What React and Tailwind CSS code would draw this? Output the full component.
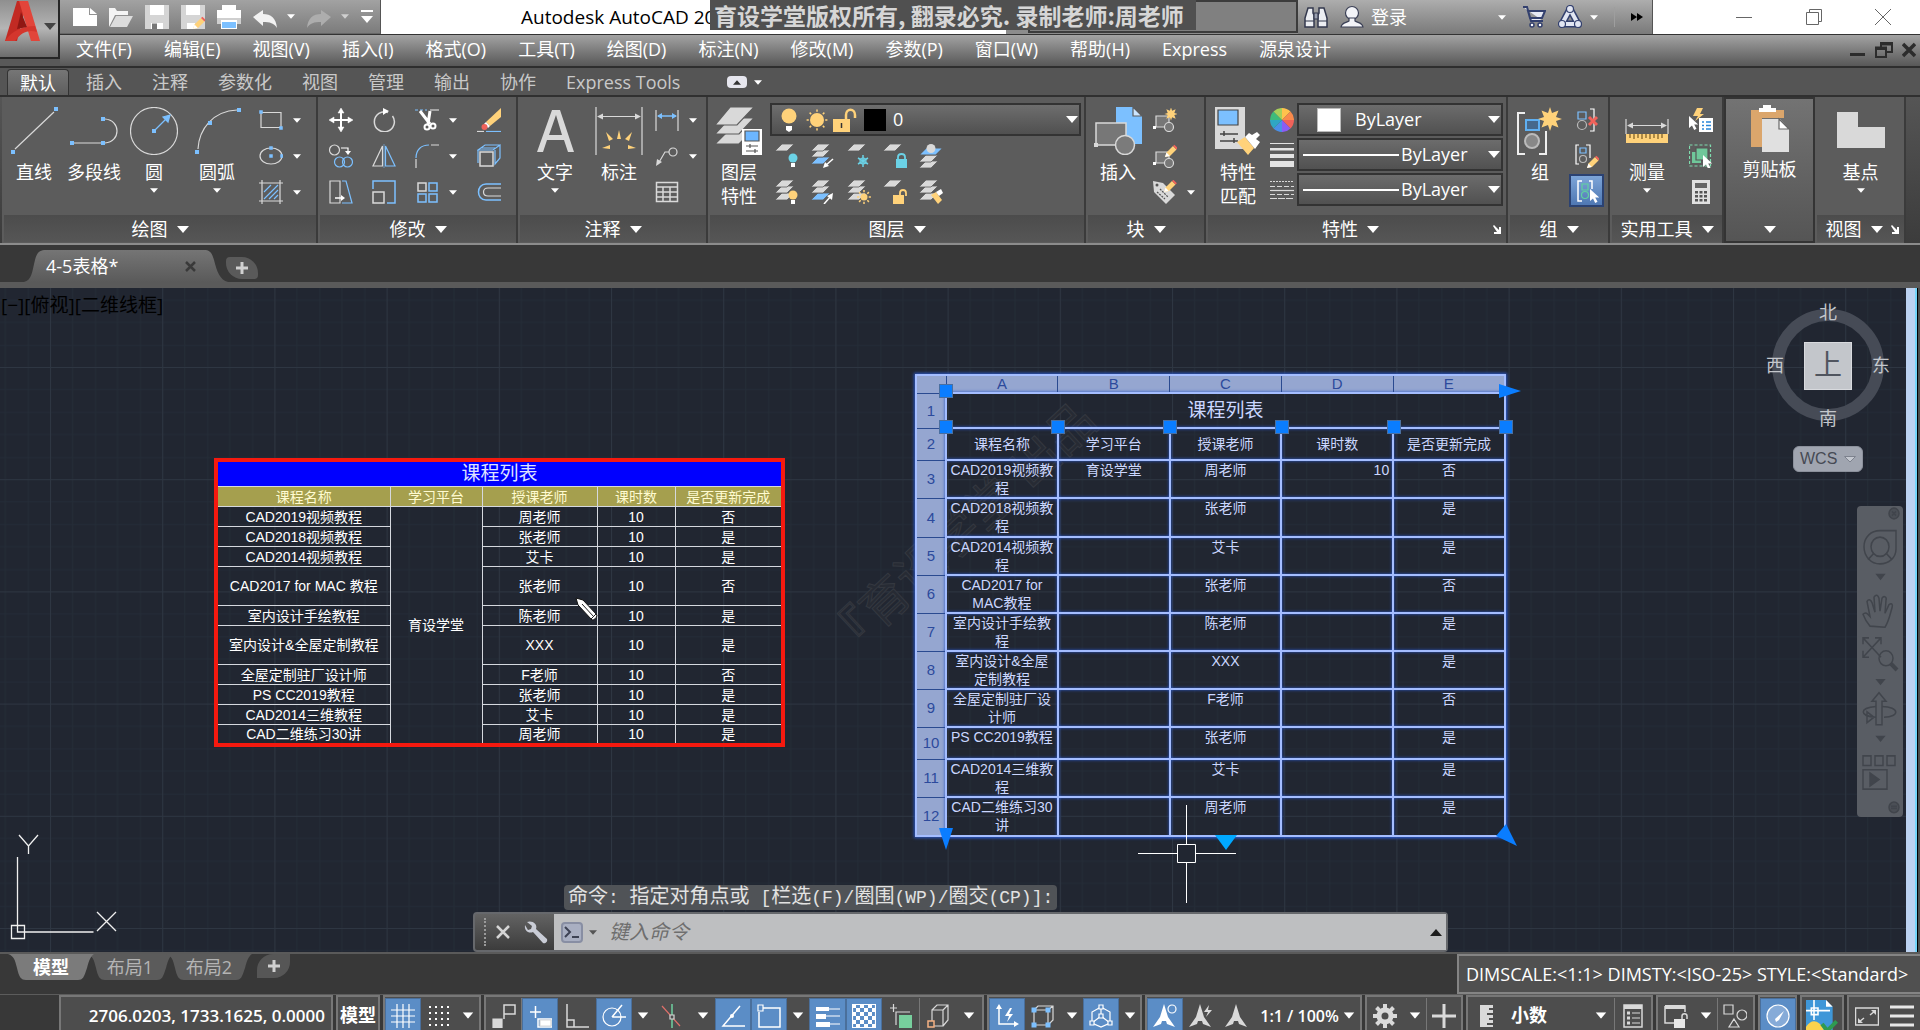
import { Fragment } from "react";

function Caret({ big = false, className = "fill-white" }) {
  return (
    <svg
      viewBox="0 0 12 7"
      className={`shrink-0 ${big ? "w-3 h-[7px]" : "w-2 h-[5px]"} ${className}`}
    >
      <path d="M0 0h12L6 7z" />
    </svg>
  );
}

function Svg({ children, size = "w-6 h-6", box = "0 0 24 24", className = "" }) {
  return (
    <svg viewBox={box} className={`shrink-0 ${size} ${className}`} fill="none" stroke="#d9d9d9" strokeWidth="1.2">
      {children}
    </svg>
  );
}

function Big({ children }) {
  return (
    <Svg size="w-12 h-12" box="0 0 48 48">
      {children}
    </Svg>
  );
}

const Grip = ({ x, y, s = 4 }) => (
  <rect x={x - s / 2} y={y - s / 2} width={s} height={s} fill="#7cc0ff" stroke="none" />
);

const Pencil = ({ x = 0, y = 0 }) => (
  <g transform={`translate(${x} ${y})`} stroke="none">
    <path d="M0 12l1.5-4.5L8 1l3.5 3.5L5 11z" fill="#ffd27a" />
    <path d="M8 1l1.4-1.2 3.5 3.4-1.4 1.3z" fill="#f0625a" />
    <path d="M0 12l1.5-4.5 3.3 3.4z" fill="#fff" />
  </g>
);

const Sun = ({ cx, cy, r }) => (
  <g stroke="#ffd27a" strokeWidth="1.5">
    <circle cx={cx} cy={cy} r={r} fill="#ffd27a" stroke="none" />
    {[0, 45, 90, 135, 180, 225, 270, 315].map((a) => (
      <path key={a} d={`M${cx} ${cy - r - 1.2}v-2.2`} transform={`rotate(${a} ${cx} ${cy})`} />
    ))}
  </g>
);

const Star = ({ cx, cy, k = 1 }) => (
  <path
    transform={`translate(${cx} ${cy}) scale(${k})`}
    fill="#ffd27a"
    stroke="none"
    d="M0-12l2 6 6.500-2.500L6-2l6 2-6 2 2.500 6.500L2 6 0 12l-2-6-6.500 2.500L-6 2l-6-2 6-2-2.500-6.500L-2-6z"
  />
);

const Sheet = ({ y, fill = "#d9d9d9" }) => (
  <path d={`M7 ${y}h12l-7 7H0z`} fill={fill} stroke="#5c5c5c" strokeWidth="0.8" />
);

const Cursor = ({ x, y }) => (
  <path transform={`translate(${x} ${y})`} d="M0 0v12l3-2.500 2.200 4.500 2.300-1.200-2.300-4.300h4z" fill="#fff" stroke="none" />
);

/* ---------- title bar ---------- */

function QuickAccess() {
  const items = [
    ["新建", <path key="a" d="M0 3h16v7h8v11H0z M17 3l7 6h-7z" fill="#fff" stroke="none" />],
    ["打开", <g key="a" stroke="none"><path d="M0 3h6l2 3h11v4H6l-6 12z" fill="#f4f4f4" /><path d="M7 11h17l-6 11H1z" fill="#dcdcdc" /></g>],
    ["保存", <g key="a" stroke="none"><path d="M0 0h24v24H0z" fill="#d5d5d5" /><path d="M5 0h14v10H5zM6 18h12v6H6z" fill="#fff" /><path d="M7 18.500h5V24H7z" fill="#777" /></g>],
    ["另存为", <g key="a" stroke="none"><path d="M0 0h24v24H0z" fill="#d5d5d5" /><path d="M5 0h14v10H5zM6 18h8v6H6z" fill="#fff" /><Pencil x={12} y={12} /></g>],
    ["打印", <g key="a" stroke="none"><path d="M5 0h14v6H5zM0 5h24v8H0z" fill="#fff" /><path d="M0 13h24v6H0z" fill="#cfcfcf" /><path d="M4 15h16v9H4z" fill="#fff" /><path d="M5 17h14v6H5z" fill="#7cc0ff" /></g>],
  ];
  return (
    <div className="w-[321px] shrink-0 flex items-center gap-3 pl-[13px] bg-gradient-to-b from-[#a2a2a2] to-[#7c7c7c] border-r border-[#555] border-b border-b-[#666]">
      {items.map(([label, icon]) => (
        <button key={label} aria-label={label}>
          <Svg>{icon}</Svg>
        </button>
      ))}
      <button aria-label="放弃" className="flex items-center gap-[10px]">
        <Svg><path d="M0 12l10-7v4c8 0 13 4 14 14-3-5-7-6-14-6v4z" fill="#f2f2f2" stroke="none" /></Svg>
        <Caret />
      </button>
      <button aria-label="重做" className="flex items-center gap-[10px]">
        <Svg><path d="M24 12L14 5v4C6 9 1 13 0 23c3-5 7-6 14-6v4z" fill="#adadad" stroke="none" /></Svg>
        <Caret className="fill-[#cfcfcf]" />
      </button>
      <button aria-label="自定义" className="flex flex-col gap-1 items-center">
        <span className="w-3 h-[2px] bg-white" />
        <Caret big />
      </button>
    </div>
  );
}

function TitleBar() {
  return (
    <div className="h-[34px] flex bg-white">
      <QuickAccess />
      <div className="relative flex-1 min-w-0 flex items-center pl-[140px] text-black text-[19px] whitespace-nowrap">
        Autodesk AutoCAD 20
        <div className="absolute z-10 left-[329px] top-0 w-[486px] h-[30px] bg-[#505050] text-[#d6d6d6] text-[23px] leading-[30px] font-bold whitespace-nowrap pl-1 font-['Noto_Sans_CJK_SC',sans-serif]">
          育设学堂版权所有, 翻录必究. 录制老师:周老师
        </div>
      </div>
      <div className="w-[292px] flex bg-[#8c8c8c] pl-[22px]">
        <input aria-label="搜索" className="w-full min-w-0 bg-[#808080] border-2 border-[#3c3c3c] h-[33px]" />
      </div>
      <div className="w-[355px] shrink-0 flex items-center pl-[6px] bg-gradient-to-b from-[#adadad] to-[#7a7a7a] border-r border-[#555] text-white text-[18px]">
        <button aria-label="查找">
          <Svg>
            <path d="M4 3h5v5l1 2v12H1v-9zM15 3h5l3 10v9h-9V10l1-2z" fill="#eceef2" stroke="#33384d" strokeWidth="1.500" />
            <path d="M10 8h4v6h-4zM1 16h9M14 16h9" stroke="#33384d" fill="#9aa0b0" />
          </Svg>
        </button>
        <button className="ml-3 flex items-center gap-[7px]">
          <Svg>
            <circle cx="12" cy="8" r="6.500" fill="#f3f4f8" stroke="#3a3f55" />
            <path d="M1 22c1-5 5-4 8-6v-3h6v3c3 2 7 1 8 6z" fill="#f3f4f8" stroke="#3a3f55" />
          </Svg>
          登录
        </button>
        <span className="flex-1" />
        <Caret />
        <button aria-label="商店" className="ml-4">
          <Svg>
            <path d="M1 2h4l4 14h12M6 6h17l-3 7H8z" fill="#e6e9f3" stroke="#33406e" strokeWidth="2" />
            <circle cx="10" cy="20" r="2" fill="#fff" stroke="#33406e" strokeWidth="1.500" />
            <circle cx="18" cy="20" r="2" fill="#fff" stroke="#33406e" strokeWidth="1.500" />
          </Svg>
        </button>
        <button aria-label="A360" className="ml-3 mr-2 flex items-center gap-2">
          <Svg>
            <path d="M12 4L4 19h16z" stroke="#33406e" strokeWidth="7" strokeLinejoin="round" />
            <path d="M12 4L4 19h16z" stroke="#e2e6f2" strokeWidth="4" />
            {[[12, 4], [4, 19], [20, 19]].map(([x, y]) => (
              <circle key={x} cx={x} cy={y} r="3.500" fill="#e2e6f2" stroke="#33406e" />
            ))}
          </Svg>
          <Caret />
        </button>
        <span className="w-px h-5 bg-[#9e9e9e] ml-2 mr-4" />
        <svg viewBox="0 0 12 8" className="w-3 h-2 mr-[9px]"><path d="M0 0l6 4-6 4zM6 0l6 4-6 4z" /></svg>
      </div>
      <div className="w-[267px] shrink-0 flex items-center justify-between pl-[83px] pr-[29px]">
        <button aria-label="最小化"><svg viewBox="0 0 16 16" className="w-4 h-4" stroke="#666" fill="none"><path d="M0 8.500h16" /></svg></button>
        <button aria-label="还原"><svg viewBox="0 0 16 16" className="w-4 h-4" stroke="#666" fill="none"><path d="M.5 3.500h12v12H.5zM3.500 3.500v-3h12v12h-3" /></svg></button>
        <button aria-label="关闭"><svg viewBox="0 0 16 16" className="w-4 h-4" stroke="#666" fill="none"><path d="M0 0l16 16M16 0L0 16" /></svg></button>
      </div>
    </div>
  );
}

const menus = [
  "文件(F)", "编辑(E)", "视图(V)", "插入(I)", "格式(O)", "工具(T)", "绘图(D)", "标注(N)",
  "修改(M)", "参数(P)", "窗口(W)", "帮助(H)", "Express", "源泉设计",
];

function MenuBar() {
  return (
    <nav className="h-8 flex items-center gap-8 pl-4 pr-1 pb-[2px] text-[18px] text-white bg-gradient-to-b from-[#a3a3a3] to-[#585858] border-t border-[#333]">
      {menus.map((m) => (
        <button key={m} className="whitespace-nowrap">{m}</button>
      ))}
      <span className="flex-1" />
      <div className="flex gap-[9px]">
        <button aria-label="最小化文档"><svg viewBox="0 0 16 16" className="w-4 h-4"><path d="M0 11h15v3H0z" fill="#2c2c2c" /></svg></button>
        <button aria-label="还原文档"><svg viewBox="0 0 18 16" className="w-[18px] h-4" fill="none" stroke="#2c2c2c" strokeWidth="2"><path d="M1 5.500h10v9.500H1zM6 5V1h11v9h-6M1 7h10M6 2.500h11" /></svg></button>
        <button aria-label="关闭文档"><svg viewBox="0 0 14 16" className="w-[14px] h-4" stroke="#2c2c2c" strokeWidth="3.500"><path d="M1 2l12 12M13 2L1 14" /></svg></button>
      </div>
    </nav>
  );
}

function Header() {
  return (
    <header className="flex">
      <div className="w-[60px] shrink-0 bg-[#595959]">
        <button aria-label="应用程序菜单" className="w-[60px] h-[59px] flex items-center bg-gradient-to-b from-[#8f8f8f] via-[#b5b5b5] to-[#6c6c6c] border-r-2 border-b-2 border-[#262626] pl-1 pb-4">
          <svg viewBox="0 0 38 42" className="w-[38px] h-[42px] shrink-0">
            <path d="M13 1h10L13 41H1z" fill="#c22a23" />
            <path d="M15 1h9l12 40H27z" fill="#e2453a" />
            <path d="M1 41C8 30 20 26 31 26l2 6c-8-3-16 0-22 9z" fill="#d4362d" />
            <path d="M17 12l-4 17 10-2z" fill="#8f1713" />
          </svg>
          <Caret big className="fill-[#444] ml-[2px] mt-3" />
        </button>
      </div>
      <div className="flex-1 min-w-0">
        <TitleBar />
        <MenuBar />
      </div>
    </header>
  );
}

/* ---------- ribbon ---------- */

const ribbonTabs = ["插入", "注释", "参数化", "视图", "管理", "输出", "协作", "Express Tools"];

function RibbonTabs() {
  return (
    <div className="h-[31px] flex items-end bg-[#555] border-t-2 border-[#2e2e2e] border-b-2 border-b-[#303030] text-[18px] text-[#c9c9c9]">
      <button className="ml-[7px] mr-[2px] h-[26px] leading-[26px] px-3 text-white bg-gradient-to-b from-[#767676] to-[#5e5e5e] border border-b-0 border-[#333] rounded-t-sm">
        默认
      </button>
      {ribbonTabs.map((t) => (
        <button key={t} className="px-[15px] h-[26px] leading-[26px] whitespace-nowrap">{t}</button>
      ))}
      <button aria-label="最小化功能区" className="h-[26px] ml-8 flex items-center gap-[7px]">
        <span className="w-5 h-3 rounded-sm bg-[#e6e6ee] flex items-center justify-center">
          <Caret className="fill-[#333] rotate-180" />
        </span>
        <Caret />
      </button>
    </div>
  );
}

function Panel({ title, width, launcher = false, children }) {
  return (
    <section className={`${width} shrink-0 flex flex-col bg-[#5c5c5c] border-r-2 border-[#3b3b3b]`}>
      <div className="h-[118px] flex">{children}</div>
      <div className="h-[27px] ml-[2px] pt-[2px] flex items-center bg-gradient-to-b from-[#4c4c4c] to-[#565656] text-white text-[18px]">
        <button className="flex-1 flex items-center justify-center gap-[9px] whitespace-nowrap">
          {title}
          <Caret big />
        </button>
        {launcher && (
          <button aria-label={`${title}设置`} className="mr-1">
            <svg viewBox="0 0 9 9" className="w-[9px] h-[9px]"><path d="M0 1l1-1 5 5V2h2v7H1V7h3z" fill="#fff" /></svg>
          </button>
        )}
      </div>
    </section>
  );
}

function BigButton({ lines, width, icon, caret = false }) {
  return (
    <button className={`${width} shrink-0 flex flex-col items-center pt-[10px] text-white text-[18px] leading-6`}>
      <Big>{icon}</Big>
      <span className="mt-[5px] flex flex-col whitespace-nowrap">
        {lines.map((l) => (
          <span key={l}>{l}</span>
        ))}
      </span>
      {caret && <Caret className="fill-white mt-1" />}
    </button>
  );
}

function SmallButton({ label, icon, caret = false }) {
  return (
    <button aria-label={label} className="h-9 flex items-center gap-[10px]">
      <Svg>{icon}</Svg>
      {caret && <Caret />}
    </button>
  );
}

function DrawPanel() {
  return (
    <Panel title="绘图" width="w-[316px]">
      <BigButton lines={["直线"]} width="w-16" icon={<><path d="M5 42L44 5" /><Grip x={3} y={45} /><Grip x={46} y={2} /></>} />
      <BigButton lines={["多段线"]} width="w-[56px]" icon={<><path d="M4 36h27M35 12c16 1 16 23 0 24" /><Grip x={2} y={36} /><Grip x={33} y={36} /><Grip x={33} y={12} /></>} />
      <BigButton
        lines={["圆"]}
        width="w-16"
        caret
        icon={<><circle cx="24" cy="24" r="23.500" /><path d="M24 24L37 11" stroke="#7cc0ff" /><path d="M40 8l-2 7-5-5z" fill="#7cc0ff" stroke="#7cc0ff" /><Grip x={24} y={24} /></>}
      />
      <BigButton lines={["圆弧"]} width="w-[62px]" caret icon={<><path d="M5 42C6 22 20 4 44 3" /><Grip x={4} y={45} /><Grip x={17} y={16} /><Grip x={46} y={3} /></>} />
      <div className="pt-[5px] ml-[11px]">
        <SmallButton label="矩形" caret icon={<><path d="M2 4.500h20v15H2z" /><Grip x={2} y={4} s={3.500} /><Grip x={22} y={20} s={3.500} /></>} />
        <SmallButton label="椭圆" caret icon={<><ellipse cx="12" cy="12" rx="11" ry="8" /><Grip x={12} y={12} s={3.500} /><Grip x={12} y={4} s={3.500} /><Grip x={23} y={12} s={3.500} /></>} />
        <SmallButton label="图案填充" caret icon={<><path d="M3 0v24M21 0v24M0 3h24M0 21h24" /><path d="M5 12l7-7M5 19L19 5M10 19l9-9M15 19l4-4" stroke="#7cc0ff" /></>} />
      </div>
    </Panel>
  );
}

function ModifyPanel() {
  return (
    <Panel title="修改" width="w-[200px]">
      <div className="pt-[5px] pl-[11px] grid grid-cols-[43px_43px_62px_24px] auto-rows-[36px]">
        <SmallButton label="移动" icon={<g stroke="#fff" strokeWidth="2"><path d="M12 3v18M3 12h18" /><path d="M12 0l3 5H9zM12 24l3-5H9zM0 12l5-3v6zM24 12l-5-3v6z" fill="#fff" strokeWidth="0.500" /></g>} />
        <SmallButton label="旋转" icon={<><path d="M16 4.500A10 10 0 1 0 20.500 8" strokeWidth="1.500" /><path d="M11 0l6 3-6 4z" fill="#fff" stroke="none" /></>} />
        <SmallButton
          label="修剪"
          caret
          icon={<><path d="M0 2h12" stroke="#7cc0ff" strokeDasharray="3 2" /><path d="M15 2h9" /><g stroke="#fff" strokeWidth="2"><path d="M5 3l10 13M15 3l-2 13" strokeWidth="3" /><circle cx="12" cy="19" r="2.500" /><circle cx="18" cy="18" r="2.500" /></g></>}
        />
        <SmallButton label="删除" icon={<><path d="M0 23.500h7" /><path d="M9 23.500h15" stroke="#7cc0ff" /><path d="M24 0v9L13 18l-4-4z" fill="#ffd27a" stroke="none" /><path d="M9 14l4 4-2 2-4-4z" fill="#fff" stroke="none" /><circle cx="7.500" cy="19" r="3" fill="#f0625a" stroke="none" /></>} />
        <SmallButton label="复制" icon={<><circle cx="5.500" cy="6" r="5" /><path d="M12 4h7v4" stroke="#fff" /><path d="M16 7h6l-3 4z" fill="#fff" stroke="none" /><circle cx="10.500" cy="18" r="5" stroke="#7cc0ff" /><circle cx="18.500" cy="18" r="5" stroke="#7cc0ff" /></>} />
        <SmallButton label="镜像" icon={<><path d="M10.500 2v20H1z" /><path d="M13.500 2v20H23z" stroke="#7cc0ff" /><path d="M12 0v24" stroke="#7cc0ff" strokeWidth="0.600" /></>} />
        <SmallButton label="圆角" caret icon={<><path d="M1 24v-9M16 1h8" /><path d="M1 14C1 6 6 1 14 1" stroke="#7cc0ff" /></>} />
        <SmallButton label="分解" icon={<><path d="M3 8h13v14H3z" strokeWidth="1.500" /><path d="M1 6v13M1 6l7-5h15l-7 5zM23 1v13l-5 6V6M4 4h14" stroke="#7cc0ff" /></>} />
        <SmallButton label="拉伸" icon={<><path d="M1 1h10v22H1z" /><path d="M13 1h4l6 22H13" stroke="#7cc0ff" /><path d="M6 18h8" stroke="#fff" strokeWidth="1.500" /><path d="M12 15l4 3-4 3z" fill="#fff" stroke="none" /></>} />
        <SmallButton label="缩放" icon={<><path d="M1 12h11v11H1z" strokeWidth="1.500" /><path d="M1 9V1h22v22h-8" stroke="#7cc0ff" strokeWidth="1.500" /></>} />
        <SmallButton label="阵列" caret icon={<><path d="M3 3h8v8H3z" strokeWidth="1.500" /><path d="M14 3h8v8h-8zM3 14h8v8H3zM14 14h8v8h-8z" stroke="#7cc0ff" strokeWidth="1.500" /></>} />
        <SmallButton label="偏移" icon={<><path d="M24 4H9C-1 4-1 20 9 20h15" stroke="#7cc0ff" strokeWidth="1.500" /><path d="M24 8H11c-6 0-6 8 0 8h13" /></>} />
      </div>
    </Panel>
  );
}

function AnnotatePanel() {
  return (
    <Panel title="注释" width="w-[190px]">
      <BigButton lines={["文字"]} width="w-[74px]" caret icon={<path d="M6 45L21 3h8l14 42h-6l-4-12H16l-4 12zM18 28h13L25 8z" fill="#d9d9d9" stroke="none" fillRule="evenodd" />} />
      <BigButton
        lines={["标注"]}
        width="w-[54px]"
        icon={
          <>
            <path d="M1 0v48M47 0v48M3 9.500h42" />
            <path d="M2 9.500l6-3v6zM46 9.500l-6-3v6z" fill="#d9d9d9" stroke="none" />
            <g fill="#ffd27a" stroke="none"><path d="M22 32l2-9 2 9zM14 34l-3-9 7 7zM34 34l3-9-7 7zM15 42l-8-1 8-3zM33 42l8-1-8-3z" /></g>
          </>
        }
      />
      <div className="pt-[5px] ml-[9px]">
        <SmallButton label="线性" caret icon={<><path d="M1 2v21M23 2v21" /><path d="M3 8h18" stroke="#7cc0ff" strokeWidth="1.500" /><path d="M2 8l5-3v6zM22 8l-5-3v6z" fill="#7cc0ff" stroke="none" /></>} />
        <SmallButton label="引线" caret icon={<><circle cx="18" cy="8" r="4" /><path d="M14 8h-4L3 20" /><path d="M1 22l1-7 5 3z" fill="#d9d9d9" stroke="none" /></>} />
        <SmallButton label="表格" icon={<path d="M1.500 2.500h21v19h-21zM1.500 7h21M1.500 12h21M1.500 17h21M8 7v14M15 7v14" strokeWidth="1.500" />} />
      </div>
    </Panel>
  );
}

function LayerPanel() {
  const badges = [
    ["关", <g key="b"><Sheet y={0} /><circle cx="18" cy="14" r="4.500" fill="#6bd2e6" stroke="none" /><path d="M16 19h4v4h-4z" fill="#fff" stroke="none" /></g>],
    ["隔离", <g key="b"><Sheet y={13} fill="#7cc0ff" /><Sheet y={6} /><Sheet y={0} /><path d="M22 15l-8 7" stroke="#fff" strokeWidth="1.500" /><path d="M12 24l2-6 4 4z" fill="#fff" stroke="none" /></g>],
    ["冻结", <g key="b"><Sheet y={0} /><path d="M16 11v12M11 14l10 6M11 20l10-6" stroke="#6bd2e6" strokeWidth="1.500" /><circle cx="16" cy="17" r="3" stroke="#6bd2e6" /></g>],
    ["锁定", <g key="b"><Sheet y={0} /><path d="M13 15h11v9H13z" fill="#6bd2e6" stroke="none" /><path d="M15 15v-2c0-4 7-4 7 0v2" stroke="#6bd2e6" strokeWidth="1.800" /></g>],
    ["置为当前", <g key="b"><Sheet y={17} /><Sheet y={11} /><path d="M7 4h17l-7 7H0z" fill="#7cc0ff" stroke="#5c5c5c" /><circle cx="12" cy="4.500" r="4.500" fill="#d9d9d9" stroke="none" /></g>],
    ["打开", <g key="b"><Sheet y={13} /><Sheet y={6} /><Sheet y={0} /><circle cx="18" cy="15" r="4.500" fill="#ffd27a" stroke="none" /><path d="M16 20h4v4h-4z" fill="#fff" stroke="none" /></g>],
    ["取消隔离", <g key="b"><Sheet y={13} fill="#7cc0ff" /><Sheet y={6} /><Sheet y={0} /><path d="M13 24l7-8" stroke="#fff" strokeWidth="1.500" /><path d="M22 13l-1 7-5-4z" fill="#fff" stroke="none" /></g>],
    ["解冻", <g key="b"><Sheet y={13} /><Sheet y={6} /><Sheet y={0} /><Sun cx={17} cy={17} r={3.5} /></g>],
    ["解锁", <g key="b"><Sheet y={0} /><path d="M10 15h11v9H10z" fill="#ffd27a" stroke="none" /><path d="M17 15v-2c0-4 6-4 6 0v3" stroke="#ffd27a" strokeWidth="1.800" /></g>],
    ["匹配图层", <g key="b"><Sheet y={13} /><Sheet y={6} /><Sheet y={0} /><path d="M12 15l5-3 6 8-4 4z" fill="#ffd27a" stroke="none" /><path d="M17 12l3 4 4-3-2-4z" fill="#fff" stroke="none" /></g>],
  ];
  return (
    <Panel title="图层" width="w-[378px]">
      <BigButton
        lines={["图层", "特性"]}
        width="w-[62px]"
        icon={
          <>
            <g fill="#d9d9d9" stroke="#5c5c5c"><path d="M15 22h24L24 37H0z" /><path d="M15 11h24L24 27H0z" /><path d="M15 0h24L22 18H0z" /></g>
            <path d="M27 22h20v26H27z" fill="#fff" stroke="none" />
            <path d="M30 24h14v10H30z" fill="#6cb6ff" stroke="#555" />
            <path d="M31 39h12M31 44h12M35 37v4M40 42v4" stroke="#555" />
          </>
        }
      />
      <div className="flex-1 pt-[6px] mr-[3px]">
        <div className="h-[33px] flex items-center pl-2 pr-px bg-gradient-to-b from-[#6e6e6e] to-[#505050] border-2 border-[#333]">
          <Svg size="w-[18px] h-6" box="0 0 18 24"><circle cx="9" cy="8" r="7.500" fill="#ffd27a" stroke="none" /><path d="M6 18h6v4l-3 2-3-2z" fill="#fff" stroke="none" /></Svg>
          <Svg className="ml-[7px]"><Sun cx={12} cy={12} r={7} /></Svg>
          <Svg className="ml-1"><path d="M0 11h17v13H0z" fill="#ffd27a" stroke="none" /><path d="M13 11V7c0-7 9-7 9 0v3" stroke="#ffd27a" strokeWidth="2.500" /><path d="M8.500 15v5" stroke="#333" strokeWidth="1.500" /></Svg>
          <span className="ml-[7px] w-[22px] h-[22px] bg-black" />
          <select aria-label="图层" className="flex-1 appearance-none bg-transparent text-white text-[18px] pl-[7px] outline-none">
            <option>0</option>
          </select>
          <Caret big />
        </div>
        <div className="mt-[2px] pl-[5px] grid grid-cols-[repeat(5,36px)]">
          {badges.map(([label, icon]) => (
            <SmallButton key={label} label={label} icon={icon} />
          ))}
        </div>
      </div>
    </Panel>
  );
}

const BlockMini = () => (
  <>
    <path d="M3 8h13v11H3z" fill="#777" />
    <circle cx="16" cy="19" r="4.500" fill="#777" />
    <path d="M0 18h3v3H0z" fill="#fff" stroke="none" />
  </>
);

function BlockPanel() {
  return (
    <Panel title="块" width="w-[120px]">
      <BigButton
        lines={["插入"]}
        width="w-16"
        icon={
          <>
            <path d="M22 0h17l9 9v28H22z" fill="#7cc0ff" stroke="none" />
            <path d="M39 0v9h9z" fill="#cbe5ff" stroke="#5c5c5c" />
            <path d="M2 16h30v22H2z" fill="#777" strokeWidth="1.500" />
            <circle cx="31" cy="38" r="9.500" fill="#7b7b7b" strokeWidth="1.500" />
            <path d="M0 36h4v4H0z" fill="#d9d9d9" stroke="none" />
          </>
        }
      />
      <div className="pt-[5px] ml-[3px]">
        <SmallButton label="创建块" icon={<><BlockMini /><Star cx={18} cy={6} k={0.55} /></>} />
        <SmallButton label="编辑块" icon={<><BlockMini /><Pencil x={12} y={1} /></>} />
        <SmallButton label="编辑属性" caret icon={<><path d="M0 1l10 2 12 12-9 9L1 12z" fill="#d9d9d9" stroke="none" /><circle cx="4" cy="5" r="1.500" fill="#555" stroke="none" /><path d="M7 9l8 8M4 12l8 7" stroke="#555" strokeDasharray="2 1" /><Pencil x={11} y={0} /></>} />
      </div>
    </Panel>
  );
}

function PropRow({ icon, label, swatch }) {
  return (
    <div className="flex items-center gap-[3px]">
      <Svg>{icon}</Svg>
      <div className="h-[33px] flex-1 flex items-center pr-px bg-gradient-to-b from-[#6c6c6c] to-[#515151] border-2 border-[#333]">
        {swatch ? (
          <span className="ml-[18px] mr-[14px] w-6 h-6 bg-white border border-[#bbb]" />
        ) : (
          <span className="ml-1 mr-[2px] w-24 h-[2px] bg-white" />
        )}
        <select aria-label={label} className="flex-1 min-w-0 appearance-none bg-transparent text-white text-[18px] outline-none">
          <option>ByLayer</option>
        </select>
        <Caret big />
      </div>
    </div>
  );
}

function PropertiesPanel() {
  const wheel = ["#ffc24d", "#f98a4b", "#f0625a", "#8a5cf5", "#4a90e8", "#2fa7c4", "#3dbb7b", "#a7cf5a"];
  return (
    <Panel title="特性" width="w-[302px]" launcher>
      <BigButton
        lines={["特性", "匹配"]}
        width="w-16"
        icon={
          <>
            <path d="M1 0h30v42H1z" fill="#d9d9d9" stroke="none" />
            <path d="M4 3h20v15H4z" fill="#7cc0ff" stroke="#444" />
            <path d="M6 27h18M6 34h18M10 24v5M20 31v5" stroke="#444" strokeWidth="1.500" />
            <path d="M23 35l8-5 9 11-6 7z" fill="#ffd27a" stroke="none" />
            <path d="M31 30l4-4 3 2 5-3 3 3-4 4 4 3-5 7z" fill="#fff" stroke="none" />
          </>
        }
      />
      <div className="flex-1 pt-[6px] mr-[3px] flex flex-col gap-[2px]">
        <PropRow
          label="颜色"
          swatch
          icon={wheel.map((c, i) => (
            <path key={c} d="M12 12V0a12 12 0 0 1 8.500 3.500z" fill={c} stroke="none" transform={`rotate(${i * 45} 12 12)`} />
          ))}
        />
        <PropRow label="线宽" icon={<path d="M0 0h24v1H0zM0 5h24v2.500H0zM0 11h24v4H0zM0 18h24v6H0z" fill="#e3e3e3" stroke="none" />} />
        <PropRow label="线型" icon={<><path d="M0 3.500h24" strokeDasharray="2 1" /><path d="M0 8.500h24M0 16.500h24" strokeDasharray="5 2" /><path d="M0 12.500h24" /><path d="M0 20.500h24" strokeDasharray="7 1" /></>} />
      </div>
    </Panel>
  );
}

function GroupPanel() {
  return (
    <Panel title="组" width="w-[102px]">
      <BigButton
        lines={["组"]}
        width="w-16"
        icon={
          <>
            <path d="M9 6H2v41h7M23 47h7V24" stroke="#eee" strokeWidth="2" />
            <path d="M10 13h13v10H10z" fill="#46698c" stroke="#5fb0f2" strokeWidth="2" />
            <circle cx="16" cy="34" r="7" fill="#888" stroke="#bbb" strokeWidth="2" />
            <Star cx={34} cy={12} />
          </>
        }
      />
      <div className="pt-[5px] -ml-[3px] flex flex-col items-center w-[35px]">
        <SmallButton label="解除编组" icon={<><path d="M3 4h8v7H3z" stroke="#7cc0ff" /><circle cx="7" cy="17" r="4.500" stroke="#bbb" /><path d="M15 1h4v22h-4" stroke="#fff" /><path d="M14 9l8 8M22 9l-8 8" stroke="#f0625a" strokeWidth="3" /></>} />
        <SmallButton label="组编辑" icon={<><path d="M4 1H1v19h3M11 1h4v13" stroke="#fff" /><path d="M5 4h6v5H5z" stroke="#7cc0ff" /><circle cx="8" cy="15" r="3.500" stroke="#bbb" /><Pencil x={12} y={12} /></>} />
        <button aria-label="启用组选择" className="w-[35px] h-[33px] flex items-center justify-center bg-gradient-to-b from-[#7da5d8] to-[#4f78b3] border-2 border-[#2b4272]">
          <Svg><path d="M7 2H3v20h4M14 2h3v8" stroke="#fff" strokeWidth="1.500" /><path d="M7 5h6v6H7z" stroke="#5fd3a0" /><circle cx="10" cy="16" r="3.500" stroke="#5fd3a0" /><Cursor x={15} y={10} /></Svg>
        </button>
      </div>
    </Panel>
  );
}

function UtilityPanel() {
  return (
    <Panel title="实用工具" width="w-[114px]">
      <BigButton
        lines={["测量"]}
        width="w-[74px]"
        caret
        icon={
          <>
            <path d="M3 12v15M45 12v15M5 18.500h38" />
            <path d="M4 18.500l6-3v6zM44 18.500l-6-3v6z" fill="#d9d9d9" stroke="none" />
            <path d="M3 27h42v9H3z" fill="#ffd27a" stroke="none" />
            <path d="M7 27v4M11 27v5M15 27v4M19 27v5M23 27v4M27 27v5M31 27v4M35 27v5M39 27v4" stroke="#7a5a20" />
          </>
        }
      />
      <div className="pt-[5px] ml-[5px]">
        <SmallButton label="快速选择" icon={<><path d="M8 0l-4 8h5l-3 5 9-7h-4l3-6z" fill="#ffd27a" stroke="none" /><path d="M10 10h14v14H10z" fill="#fff" stroke="none" /><path d="M13 14h2M13 17.500h2M13 21h2M17 14h5M17 17.500h5M17 21h5" stroke="#2a86d8" strokeWidth="1.500" /><Cursor x={0} y={8} /></>} />
        <SmallButton label="全部选择" icon={<><path d="M.5 1h21v21H.5z" stroke="#7fdcae" strokeDasharray="3 2" /><path d="M3 8h9v11H3z" fill="#6fc79a" stroke="none" /><path d="M7 4h12v12H7z" fill="#6fc79a" stroke="#555" /><Cursor x={14} y={11} /></>} />
        <SmallButton label="计算器" icon={<><path d="M3 0h18v24H3z" fill="#e0e0e0" stroke="none" /><path d="M6 3h12v5H6z" fill="#666" stroke="none" />{[11, 15, 19].map((y) => [6, 10.5, 15].map((x) => <path key={`${x}-${y}`} d={`M${x} ${y}h3v2.500h-3z`} fill="#555" stroke="none" />))}</>} />
      </div>
    </Panel>
  );
}

function Ribbon() {
  return (
    <div className="flex pl-[2px] h-[146px] bg-gradient-to-b from-[#555] to-[#3c3c3c] overflow-hidden">
      <DrawPanel />
      <ModifyPanel />
      <AnnotatePanel />
      <LayerPanel />
      <BlockPanel />
      <PropertiesPanel />
      <GroupPanel />
      <UtilityPanel />
      <section className="w-[91px] shrink-0 flex flex-col items-center bg-gradient-to-b from-[#737373] to-[#555] border-2 border-[#343434]">
        <button className="flex-1 flex flex-col items-center pt-[5px] text-white text-[18px] leading-6">
          <Big>
            <path d="M5 6h33v8H16v29H5z" fill="#dba66c" stroke="none" />
            <path d="M16 15h18l9 10v24H16z" fill="#e0e0e0" stroke="none" />
            <path d="M33 15v10h10z" fill="#fff" stroke="#666" />
            <path d="M17 1h8v3h5v4H13V4h4z" fill="#fff" stroke="none" />
          </Big>
          <span className="mt-[5px]">剪贴板</span>
        </button>
        <Caret big className="fill-white mb-2" />
      </section>
      <Panel title="视图" width="w-[91px]" launcher>
        <BigButton lines={["基点"]} width="w-[91px]" caret icon={<path d="M0 5h21v15h27v21H0z" fill="#d9d9d9" stroke="none" />} />
      </Panel>
    </div>
  );
}

function DocumentTabs() {
  return (
    <div className="h-[45px] flex items-end bg-[#383838] border-t-2 border-[#8c8c8c] border-b-[6px] border-b-[#5a5a5a] text-[18px] text-white">
      <div className="relative ml-6 w-[204px] h-8 flex items-center pl-[22px] pr-[14px]">
        <svg viewBox="0 0 204 32" className="absolute inset-0 w-full h-full">
          <defs>
            <linearGradient id="doc" x1="0" y1="0" x2="0" y2="1">
              <stop offset="0" stopColor="#757575" />
              <stop offset="1" stopColor="#5a5a5a" />
            </linearGradient>
          </defs>
          <path d="M0 32c8-2 8-10 11-22C13 2 16 0 22 0h158c6 0 8 3 10 10 3 12 6 20 14 22z" fill="url(#doc)" />
        </svg>
        <span className="relative flex-1">4-5表格*</span>
        <button aria-label="关闭图形" className="relative mr-[18px]">
          <svg viewBox="0 0 11 11" className="w-[11px] h-[11px]" stroke="#3a3a3a" strokeWidth="2.500"><path d="M1 1l9 9M10 1l-9 9" /></svg>
        </button>
      </div>
      <button aria-label="新图形" className="mb-[3px] -ml-[2px] w-8 h-[22px] rounded-tl-sm rounded-tr-2xl rounded-bl-2xl rounded-br-sm bg-[#5a5a5a] flex items-center justify-center">
        <svg viewBox="0 0 12 12" className="w-3 h-3" stroke="#d0d0d0" strokeWidth="3"><path d="M6 0v12M0 6h12" /></svg>
      </button>
    </div>
  );
}

/* ---------- drawing area ---------- */

function GridLines() {
  return (
    <svg className="absolute inset-0 w-full h-full">
      <defs>
        <pattern id="grid" x="50" y="79" width="112.2" height="112.2" patternUnits="userSpaceOnUse">
          <path d="M22.500 0v112M45.500 0v112M67.500 0v112M90.500 0v112M0 22.500h112M0 45.500h112M0 67.500h112M0 90.500h112" stroke="#242c37" />
          <path d="M.5 0v113M0 .5h113" stroke="#2e3642" />
        </pattern>
      </defs>
      <rect width="100%" height="100%" fill="url(#grid)" />
    </svg>
  );
}

const courses = [
  ["CAD2019视频教程", "周老师", "否", "h-[20px]"],
  ["CAD2018视频教程", "张老师", "是", "h-[20px]"],
  ["CAD2014视频教程", "艾卡", "是", "h-[20px]"],
  ["CAD2017 for MAC 教程", "张老师", "否", "h-[39px]"],
  ["室内设计手绘教程", "陈老师", "是", "h-[20px]"],
  ["室内设计&全屋定制教程", "XXX", "是", "h-[39px]"],
  ["全屋定制驻厂设计师", "F老师", "否", "h-[20px]"],
  ["PS CC2019教程", "张老师", "是", "h-[20px]"],
  ["CAD2014三维教程", "艾卡", "是", "h-[20px]"],
  ["CAD二维练习30讲", "周老师", "是", "h-[20px]"],
];

const headings = ["课程名称", "学习平台", "授课老师", "课时数", "是否更新完成"];

function CourseTable() {
  const cell = "p-0 border border-[#d5d8de]";
  return (
    <table className="absolute left-[214px] top-[170px] w-[571px] table-fixed border-collapse border-4 border-[#f5190f] text-center text-white text-[14px] leading-[18px]">
      <colgroup>
        <col className="w-[174px]" />
        <col className="w-[92px]" />
        <col className="w-[115px]" />
        <col className="w-[78px]" />
        <col />
      </colgroup>
      <thead>
        <tr className="h-[25px] bg-[#0000ff]">
          <th colSpan={5} className="p-0 text-[19px] leading-6 font-normal text-[#dfe3ff]">课程列表</th>
        </tr>
        <tr className="h-[20px] bg-[#a59f4e] text-[#fffbd0]">
          {headings.map((h) => (
            <th key={h} className={`${cell} font-normal`}>{h}</th>
          ))}
        </tr>
      </thead>
      <tbody>
        {courses.map(([name, teacher, done, height], i) => (
          <tr key={name} className={height}>
            <td className={cell}>{name}</td>
            {i === 0 && <td rowSpan={10} className={cell}>育设学堂</td>}
            <td className={cell}>{teacher}</td>
            <td className={cell}>10</td>
            <td className={cell}>{done}</td>
          </tr>
        ))}
      </tbody>
    </table>
  );
}

const sheetRows = [
  ["CAD2019视频教", "程", "周老师", "否", "h-[38px]"],
  ["CAD2018视频教", "程", "张老师", "是", "h-[39px]"],
  ["CAD2014视频教", "程", "艾卡", "是", "h-[38px]"],
  ["CAD2017 for", "MAC教程", "张老师", "否", "h-[38px]"],
  ["室内设计手绘教", "程", "陈老师", "是", "h-[38px]"],
  ["室内设计&全屋", "定制教程", "XXX", "是", "h-[38px]"],
  ["全屋定制驻厂设", "计师", "F老师", "否", "h-[38px]"],
  ["PS CC2019教程", "", "张老师", "是", "h-[32px]"],
  ["CAD2014三维教", "程", "艾卡", "是", "h-[38px]"],
  ["CAD二维练习30", "讲", "周老师", "是", "h-[39px]"],
];

const gripSpots = [
  "left-[24px] top-[10px]",
  "left-[24px] top-[46px]",
  "left-[136px] top-[46px]",
  "left-[248px] top-[46px]",
  "left-[360px] top-[46px]",
  "left-[472px] top-[46px]",
  "left-[584px] top-[46px]",
];

function SelectedTable() {
  const line = "p-0 whitespace-nowrap border-2 border-[#a4bdff] shadow-[0_0_3px_1px_#2c57c4]";
  const cell = `${line} align-top`;
  const head = "p-0 font-normal text-[15px] leading-4 text-[#2c4a9c] bg-[#95a6d0] border border-[#2a4a90]";
  return (
    <div className="absolute left-[915px] top-[86px] w-[592px]">
      <table className="w-[591px] table-fixed border-collapse border-2 border-[#a4bdff] shadow-[0_0_3px_1px_#2c57c4] text-center text-[14px] leading-[18px] text-[#cbd7ff]">
        <colgroup>
          <col className="w-[30px]" />
          <col />
          <col />
          <col />
          <col />
          <col />
        </colgroup>
        <thead>
          <tr className="h-[17px]">
            <th className={head} />
            {["A", "B", "C", "D", "E"].map((c) => (
              <th key={c} className={head}>{c}</th>
            ))}
          </tr>
          <tr className="h-[35px]">
            <th className={head}>1</th>
            <th colSpan={5} className={`${line} font-normal text-[19px]`}>课程列表</th>
          </tr>
          <tr className="h-[32px]">
            <th className={head}>2</th>
            {headings.map((h) => (
              <th key={h} className={`${line} font-normal`}>{h}</th>
            ))}
          </tr>
        </thead>
        <tbody>
          {sheetRows.map(([a, b, teacher, done, height], i) => (
            <tr key={a} className={height}>
              <th className={head}>{i + 3}</th>
              <td className={cell}>
                {a}
                {b && <br />}
                {b}
              </td>
              <td className={cell}>{i === 0 && "育设学堂"}</td>
              <td className={cell}>{teacher}</td>
              <td className={`${cell} text-right pr-[3px]`}>{i === 0 && "10"}</td>
              <td className={cell}>{done}</td>
            </tr>
          ))}
        </tbody>
      </table>
      {gripSpots.map((spot) => (
        <span key={spot} className={`absolute w-[14px] h-[14px] bg-[#0a7dff] border border-[#4a6fa0] ${spot}`} />
      ))}
      <svg viewBox="0 0 22 14" className="absolute left-[584px] top-[10px] w-[22px] h-[14px]"><path d="M0 0l22 7-22 7z" fill="#0a7dff" /></svg>
      <svg viewBox="0 0 14 22" className="absolute left-[24px] top-[454px] w-[14px] h-[22px]"><path d="M0 0h14L7 22z" fill="#0a7dff" /></svg>
      <svg viewBox="0 0 22 15" className="absolute left-[300px] top-[461px] w-[22px] h-[15px]"><path d="M0 0h22L11 15z" fill="#00a8ff" /></svg>
      <svg viewBox="0 0 21 22" className="absolute left-[581px] top-[450px] w-[21px] h-[22px]"><path d="M0 12L10 0l11 22z" fill="#0a7dff" /></svg>
    </div>
  );
}

function ViewCube() {
  return (
    <div className="absolute right-[28px] top-[15px] w-32 h-[126px] grid grid-cols-[22px_1fr_22px] grid-rows-[20px_1fr_20px] place-items-center text-[18px] leading-5 text-[#c4c7cc]">
      <svg viewBox="0 0 128 126" className="absolute inset-0 w-full h-full">
        <circle cx="64" cy="62" r="50" fill="none" stroke="#464b56" strokeWidth="12" />
      </svg>
      <span className="relative col-start-2">北</span>
      <span className="relative col-start-1 row-start-2">西</span>
      <button className="relative col-start-2 row-start-2 w-12 h-12 bg-[#c3c6cb] border border-[#d8dade] text-[#50555f] text-[28px] leading-10">上</button>
      <span className="relative col-start-3 row-start-2">东</span>
      <span className="relative col-start-2 row-start-3">南</span>
    </div>
  );
}

function NavBar() {
  return (
    <div className="absolute right-[17px] top-[218px] w-[46px] h-[311px] rounded-sm bg-[#595d64]">
      <svg viewBox="0 0 46 290" preserveAspectRatio="none" className="w-full h-full" fill="none" stroke="#41454c" strokeWidth="1.500">
        <circle cx="37" cy="7" r="5" fill="#4b4f56" /><path d="M35 5l4 4M39 5l-4 4" />
        <path d="M23 23h16v17c0 8-7 14-16 14S7 47 7 38s7-15 16-15z" />
        <circle cx="23" cy="38" r="9" /><path d="M11 50l6-6M35 50l-6-6" />
        <path d="M20 64h7l-3.500 4z" fill="#41454c" />
        <path d="M13 112c-3-3-5-6-7-11 3-3 5 0 7 2l-3-14c2-3 4-1 5 1l3 9-1-14c2-3 4-2 5 1l1 12 2-12c2-3 5-1 4 2l-1 12 4-8c3-2 4 0 3 3-2 6-3 12-7 18z" />
        <path d="M6 123l18 18M6 141l18-18M6 129v-6h6M18 123h6v6M6 135v6h6" />
        <circle cx="29" cy="142" r="7" /><path d="M34 147l6 6" strokeWidth="4" />
        <path d="M20 162h7l-3.500 4z" fill="#41454c" />
        <path d="M19 204v-22h-4l7-8 7 8h-4v22z" /><path d="M19 197C2 196 2 188 19 187M25 187c18 0 18 10 2 10M10 192v10l7-5z" />
        <path d="M20 215h7l-3.500 4z" fill="#41454c" />
        <path d="M6 233h8v9H6zM18 233h8v9h-8zM30 233h8v9h-8zM6 246h24v18H6z" /><path d="M13 249v12l9-6z" fill="#41454c" />
        <circle cx="37" cy="281" r="5" fill="#4b4f56" /><path d="M34 280h6M34 282h6" />
      </svg>
    </div>
  );
}

// Chinese runs are set a little larger than the monospaced Latin ones
function PromptText({ text }) {
  return text.split(/([\u4e00-\u9fa5]+)/).map((part, i) => (
    <Fragment key={i}>
      {i % 2 ? <span className="text-[20px]">{part}</span> : part}
    </Fragment>
  ));
}

function CommandLine() {
  return (
    <div className="absolute left-[473px] bottom-0 w-[975px] h-[40px] flex rounded border-2 border-[#66686c] bg-gradient-to-b from-[#636363] to-[#3c3c3c]">
      <div className="w-[79px] shrink-0 flex items-center pl-[9px] gap-[10px]">
        <span className="h-7 border-l-2 border-dotted border-[#9a9a9a]" />
        <button aria-label="关闭命令行">
          <svg viewBox="0 0 14 14" className="w-[14px] h-[14px]" stroke="#d5d5d5" strokeWidth="2.500"><path d="M1 1l12 12M13 1L1 13" /></svg>
        </button>
        <button aria-label="自定义命令行">
          <Svg className="ml-1"><path d="M3 2l5 4-1 3-3 1-3-5C0 11 5 14 9 12l10 11c2 1 5-1 4-4L12 9c2-5-4-9-9-7z" fill="#c9ccd6" stroke="none" /></Svg>
        </button>
      </div>
      <div className="flex-1 flex items-center pl-[7px] pr-1 bg-[#bebfc1]">
        <span className="w-[22px] h-[21px] rounded-sm bg-[#a9afc2] border-2 border-[#888ea3] flex items-center justify-center">
          <svg viewBox="0 0 16 14" className="w-4 h-[14px]" fill="none" stroke="#3d4254" strokeWidth="2"><path d="M1 2l5 5-5 5M8 12h7" /></svg>
        </span>
        <Caret className="fill-[#555] ml-[6px]" />
        <input aria-label="命令" placeholder="键入命令" className="flex-1 min-w-0 bg-transparent outline-none pl-3 text-[20px] italic placeholder:text-[#6e6e6e]" />
        <Caret big className="fill-[#1d1d1d] rotate-180" />
      </div>
    </div>
  );
}

function Canvas() {
  return (
    <main className="relative flex-1 min-h-[664px] overflow-hidden bg-[#212631] font-['Liberation_Sans','Noto_Sans_CJK_SC',sans-serif]">
      <GridLines />
      <div className="absolute left-px top-[5px] text-[19px] leading-6 text-black font-['Open_Sans','Noto_Sans_CJK_SC',sans-serif]">[−][俯视][二维线框]</div>
      <div className="absolute left-[786px] top-[214px] text-[48px] leading-[60px] whitespace-nowrap -rotate-[43deg] text-[#272b34] [-webkit-text-stroke:1px_#343840]">『育设学堂 出品</div>
      <CourseTable />
      <svg viewBox="0 0 24 24" className="absolute left-[575px] top-[309px] w-6 h-6"><path d="M1 1l2 7 14 15c2 0 5-2 5-5L8 3z" fill="#fff" stroke="#111" /><path d="M7 7l12 13M16 22l5-5" stroke="#222" /></svg>
      <SelectedTable />
      <svg viewBox="0 0 98 98" className="absolute left-[1138px] top-[517px] w-[98px] h-[98px]" fill="none" stroke="#fff"><path d="M48.500 0v39M48.500 58v40M0 48.500h39M58 48.500h40M39.500 39.500h18v18h-18z" /></svg>
      <svg viewBox="0 0 120 110" className="absolute left-0 bottom-0 w-[120px] h-[120px]" preserveAspectRatio="xMinYMin" fill="none" stroke="#f0f0f0" strokeWidth="1.300">
        <path d="M17.500 25v75h76M11.500 93.500h13v13h-13zM19 3l9.500 11L38 3M28.500 14v8M97 80l19 19M116 80L97 99" />
      </svg>
      <ViewCube />
      <button className="absolute right-[57px] top-[158px] w-[70px] h-[26px] rounded-md bg-[#a0a5b0] border border-[#8c919c] text-[16px] leading-6 text-[#464a54] flex items-center justify-between px-[6px]">
        WCS
        <svg viewBox="0 0 12 7" className="w-3 h-[7px]"><path d="M.5.5h11L6 6z" fill="#c4c8d0" stroke="#7d828e" /></svg>
      </button>
      <NavBar />
      <div className="absolute right-0 inset-y-0 w-[14px] flex">
        <div className="w-[9px] bg-[#bcd2f1]" />
        <div className="w-[2px] bg-[#74d6fb]" />
        <div className="w-px bg-black" />
        <div className="w-[2px] bg-[#4d4f4e]" />
      </div>
      <div className="absolute left-[564px] bottom-[42px] h-[25px] px-1 rounded-sm bg-[#505357] text-[#e2e2e2] text-[18px] leading-[25px] whitespace-pre font-['Liberation_Mono','Noto_Sans_CJK_SC',monospace]">
        <PromptText text="命令: 指定对角点或 [栏选(F)/圈围(WP)/圈交(CP)]:" />
      </div>
      <CommandLine />
    </main>
  );
}

/* ---------- bottom bars ---------- */

function LayoutTab({ label, active = false }) {
  return (
    <button className={`relative w-[86px] -mr-[7px] h-[26px] leading-[25px] ${active ? "z-10 text-white font-bold" : "text-[#b4b4b4]"}`}>
      <svg viewBox="0 0 86 26" className="absolute inset-0 w-full h-full">
        <path d="M0 0c6 2 7 6 9 14 2 9 4 12 9 12h52c5 0 6-3 9-12 2-8 4-12 7-14z" fill={active ? "#7b7b7b" : "#5b5b5b"} />
      </svg>
      <span className="relative">{label}</span>
    </button>
  );
}

function LayoutBar() {
  return (
    <div className="h-[42px] flex items-start bg-[#383838] border-t-2 border-[#5a5a5a] text-[18px]">
      <div className="w-2" />
      <LayoutTab label="模型" active />
      <LayoutTab label="布局1" />
      <LayoutTab label="布局2" />
      <button aria-label="新建布局" className="ml-3 w-[33px] h-6 rounded-tl-2xl rounded-br-2xl bg-[#565656] flex items-center justify-center">
        <svg viewBox="0 0 12 12" className="w-3 h-3" stroke="#d0d0d0" strokeWidth="3"><path d="M6 0v12M0 6h12" /></svg>
      </button>
      <div className="ml-auto w-[463px] h-10 pl-[7px] bg-[#505050] border-2 border-r-0 border-[#848484] text-white text-[18px] leading-9 font-medium whitespace-nowrap">
        {"DIMSCALE:<1:1> DIMSTY:<ISO-25> STYLE:<Standard>"}
      </div>
    </div>
  );
}

function Cell({ label, on = false, width = "w-9", line = false, children }) {
  return (
    <button
      aria-label={label}
      className={`${width} h-full shrink-0 flex items-center justify-center ${on ? "bg-[#5b8dc6] border border-[#4a6f9b]" : ""} ${line ? "border-r border-[#777]" : ""}`}
    >
      {children && <Svg>{children}</Svg>}
    </button>
  );
}

function Drop({ label, width = "w-7", line = false }) {
  return (
    <button aria-label={label} className={`${width} h-full shrink-0 flex items-center justify-center ${line ? "border-r border-[#777]" : ""}`}>
      <Caret big className="fill-white scale-90" />
    </button>
  );
}

function Group({ width, children }) {
  return <div className={`${width} shrink-0 h-[38px] pt-px flex items-center bg-[#4d4d4d] border-2 border-b-0 border-[#777]`}>{children}</div>;
}

const Arrow = ({ fill = "#d9d9d9" }) => (
  <path d="M11 0l4 13 7 10-8-3-1-3h-4l-1 3-8 3 7-10z" fill={fill} stroke="none" />
);

function StatusBar() {
  return (
    <footer className="h-9 flex gap-[3px] pl-[59px] bg-[#383838] border-t border-[#5c5c5c] text-white text-[18px] overflow-hidden">
      <Group width="w-[274px]"><span className="ml-auto pr-[6px] text-[17px] font-semibold whitespace-nowrap">2706.0203, 1733.1625, 0.0000</span></Group>
      <Group width="w-[44px]"><button className="w-full font-semibold whitespace-nowrap">模型</button></Group>
      <Group width="w-[98px]">
        <Cell label="栅格" on><path d="M6 0v24M12 0v24M18 0v24M0 6h24M0 12h24M0 18h24" stroke="#fff" /></Cell>
        <Cell label="捕捉模式">
          {[3, 9, 15, 21].map((y) => [3, 9, 15, 21].map((x) => <rect key={`${x}-${y}`} x={x - 1} y={y - 1} width="2" height="2" fill="#fff" stroke="none" />))}
        </Cell>
        <Drop label="捕捉设置" width="w-[22px]" />
      </Group>
      <Group width="w-[500px]">
        <Cell label="推断约束" line><path d="M1 15h9v9H1z" fill="#d9d9d9" /><path d="M12 15V1h11v9H12" strokeWidth="1.500" /></Cell>
        <Cell label="动态输入" on><path d="M2 8h11M7.500 2v12M10 15h14v8H10z" stroke="#fff" strokeWidth="1.500" /><path d="M12 16h11v6H12z" fill="#fff" /></Cell>
        <Cell label="正交" width="w-[38px]"><path d="M2 0v23h22M2 16h7v7" strokeWidth="1.500" /></Cell>
        <Cell label="极轴追踪" on><circle cx="10" cy="13" r="9" stroke="#fff" /><path d="M10 13h14M10 13L20 1" stroke="#fff" strokeWidth="1.500" /></Cell>
        <Drop label="极轴设置" width="w-[22px]" />
        <Cell label="等轴测草图"><path d="M2 2l18 20" stroke="#e0706a" /><path d="M12 0v24" stroke="#6fd0a0" strokeWidth="1.500" /><path d="M10 11h4v4h-4z" fill="#4d4d4d" /></Cell>
        <Drop label="等轴测设置" width="w-[25px]" />
        <Cell label="对象捕捉追踪" on><path d="M19 2L2 22h22" stroke="#fff" strokeWidth="1.500" /><circle cx="11" cy="12" r="2" fill="#fff" stroke="none" /></Cell>
        <Cell label="对象捕捉" on><path d="M6 4h17v19H2V8" stroke="#fff" strokeWidth="1.500" /><path d="M1 1h5v6H1z" stroke="#fff" /></Cell>
        <Drop label="对象捕捉设置" width="w-[22px]" />
        <Cell label="线宽" on width="w-[37px]"><path d="M0 5h24M0 12h24M0 20h24" stroke="#fff" /><path d="M0 3h13v4H0zM0 10h10v5H0zM0 18h14v5H0z" fill="#fff" stroke="none" /></Cell>
        <Cell label="透明度" on>
          <path d="M.5.5h23v23H.5z" stroke="#fff" />
          {[0, 1, 2, 3, 4, 5].map((r) => [0, 1, 2].map((c) => <rect key={`${r}-${c}`} x={c * 8 + (r % 2) * 4} y={r * 4} width="4" height="4" fill="#fff" stroke="none" />))}
        </Cell>
        <Cell label="选择循环" width="w-[38px]" line><path d="M1 4h7M4.500 0v8M7 21V8h14" /><path d="M10 11h13v13H10z" fill="#77cf9d" stroke="none" /></Cell>
        <Cell label="三维对象捕捉"><path d="M6 6h11v16H6zM6 6l5-5h11v15l-5 6M17 6l5-5" /><path d="M2 17h6v6H2z" stroke="#f5b183" strokeWidth="1.500" fill="#4d4d4d" /></Cell>
        <Drop label="三维对象捕捉设置" width="w-[25px]" />
      </Group>
      <Group width="w-[155px]">
        <Cell label="动态UCS" on><path d="M4 2v18h18" stroke="#fff" strokeWidth="1.500" /><path d="M4 0l3 5H1zM24 20l-5-3v6z" fill="#fff" stroke="none" /><path d="M15 4l-5 8h4l-2 6 6-8h-4l3-6z" fill="#fff" stroke="none" /></Cell>
        <Cell label="选择过滤"><path d="M3 6h14v15H3zM3 6l4-4h15v14l-5 5M17 6l5-4" /><Grip x={3} y={6} s={5} /><Grip x={17} y={6} s={5} /><Grip x={3} y={21} s={5} /><Grip x={17} y={21} s={5} /></Cell>
        <Drop label="过滤设置" width="w-[22px]" />
        <Cell label="小控件" on><path d="M12 3l9 5v11l-9 4-9-4V8zM12 12v-9M12 12l9 7M12 12l-9 7" stroke="#fff" /><path d="M10 1h4v4h-4zM10 10h4v4h-4zM1 17h4v4H1zM19 17h4v4h-4z" fill="#5b8dc6" stroke="#fff" /></Cell>
        <Drop label="小控件设置" width="w-[21px]" />
      </Group>
      <Group width="w-[217px]">
        <Cell label="注释可见性" on><Arrow fill="#fff" /><circle cx="19" cy="5" r="4" stroke="#fff" /></Cell>
        <Cell label="自动缩放"><Arrow /><path d="M20 1l-5 7h4l-2 5 6-7h-4z" fill="#d9d9d9" stroke="none" /></Cell>
        <Cell label="注释比例"><Arrow /></Cell>
        <button className="flex-1 flex items-center justify-center gap-1 whitespace-nowrap text-[16px] font-semibold">
          1:1 / 100%
          <Caret big className="fill-white scale-90" />
        </button>
      </Group>
      <Group width="w-[98px]">
        <Cell label="工作空间">
          <circle cx="12" cy="12" r="6" stroke="#d9d9d9" strokeWidth="5" />
          {[0, 45, 90, 135, 180, 225, 270, 315].map((a) => (
            <path key={a} d="M12 0v5" stroke="#d9d9d9" strokeWidth="4" transform={`rotate(${a} 12 12)`} />
          ))}
        </Cell>
        <Drop label="工作空间列表" width="w-[24px]" line />
        <Cell label="注释监视器" width="w-[34px]"><path d="M12 0v24M0 12h24" strokeWidth="3" /></Cell>
      </Group>
      <Group width="w-[187px]">
        <Cell label="单位"><path d="M6 1h13v3h-4v2h4v3h-6v2h6v3h-4v2h4v3h-6v2h6v2H6z" fill="#d9d9d9" stroke="none" /></Cell>
        <select aria-label="图形单位" className="flex-1 min-w-0 pl-[7px] appearance-none bg-transparent font-semibold outline-none">
          <option>小数</option>
        </select>
        <Drop label="单位列表" line />
        <Cell label="快捷特性"><path d="M3 1h18v22H3z" strokeWidth="1.500" /><path d="M3 3h18" strokeWidth="4" /><path d="M6 9h3M6 14h3M6 19h3" strokeWidth="3" /><path d="M11 9h8M11 14h8M11 19h8" /></Cell>
      </Group>
      <Group width="w-[99px]">
        <Cell label="锁定用户界面"><path d="M1 2h20v6M1 2v17h9" strokeWidth="1.500" /><path d="M1 3h20" strokeWidth="4" /><path d="M10 15h11v9H10z" fill="#e8e8e8" stroke="none" /><path d="M18 15v-3c0-3 5-3 5 0v3" strokeWidth="1.500" /></Cell>
        <Drop label="锁定列表" width="w-[24px]" line />
        <Cell label="隔离对象" width="w-[34px]"><path d="M1 1h9v9H1zM11 15l5 8H6z" /><circle cx="19" cy="11" r="5" /></Cell>
      </Group>
      <Group width="w-[39px]"><Cell label="硬件加速" on><circle cx="12" cy="12" r="11" fill="#86abd8" stroke="#fff" /><path d="M10 18l-1-3 9-8-5 9z" fill="#fff" stroke="none" /></Cell></Group>
      <Group width="w-[44px]">
        <button aria-label="图形状态" className="h-full pl-1">
          <Svg size="w-8 h-8">
            <path d="M0 0h15l5 5v19H0z" fill="#3f97d8" stroke="none" /><path d="M15 0v5h5z" fill="#fff" stroke="none" />
            <path d="M0 24v-4c4-6 10-6 14 4z" fill="#fbd24c" stroke="none" /><path d="M6 0v15M0 8h18M4 6h5v5H4z" stroke="#fff" /><path d="M12 18l4 5 7-7" stroke="#2f9a50" strokeWidth="3" />
          </Svg>
        </button>
      </Group>
      <div className="flex-1 h-[38px] pt-px flex items-center bg-[#4d4d4d] border-t-2 border-l-2 border-[#777]">
        <Cell label="全屏显示"><path d="M.5 4h23v17H.5z" strokeWidth="1.500" /><path d="M15 11l5-4M9 14l-5 4" strokeWidth="1.500" /><path d="M16 6h5v5zM3 14v5h5z" fill="#d9d9d9" stroke="none" /></Cell>
        <Cell label="自定义" width="w-[34px]"><path d="M0 3h24M0 12h24M0 21h24" stroke="#e8e8e8" strokeWidth="3" /></Cell>
      </div>
    </footer>
  );
}

export default function App() {
  return (
    <div className="min-h-screen flex flex-col bg-[#383838] overflow-hidden font-['Open_Sans','Noto_Sans_CJK_SC',sans-serif]">
      <Header />
      <RibbonTabs />
      <Ribbon />
      <DocumentTabs />
      <Canvas />
      <LayoutBar />
      <StatusBar />
    </div>
  );
}
